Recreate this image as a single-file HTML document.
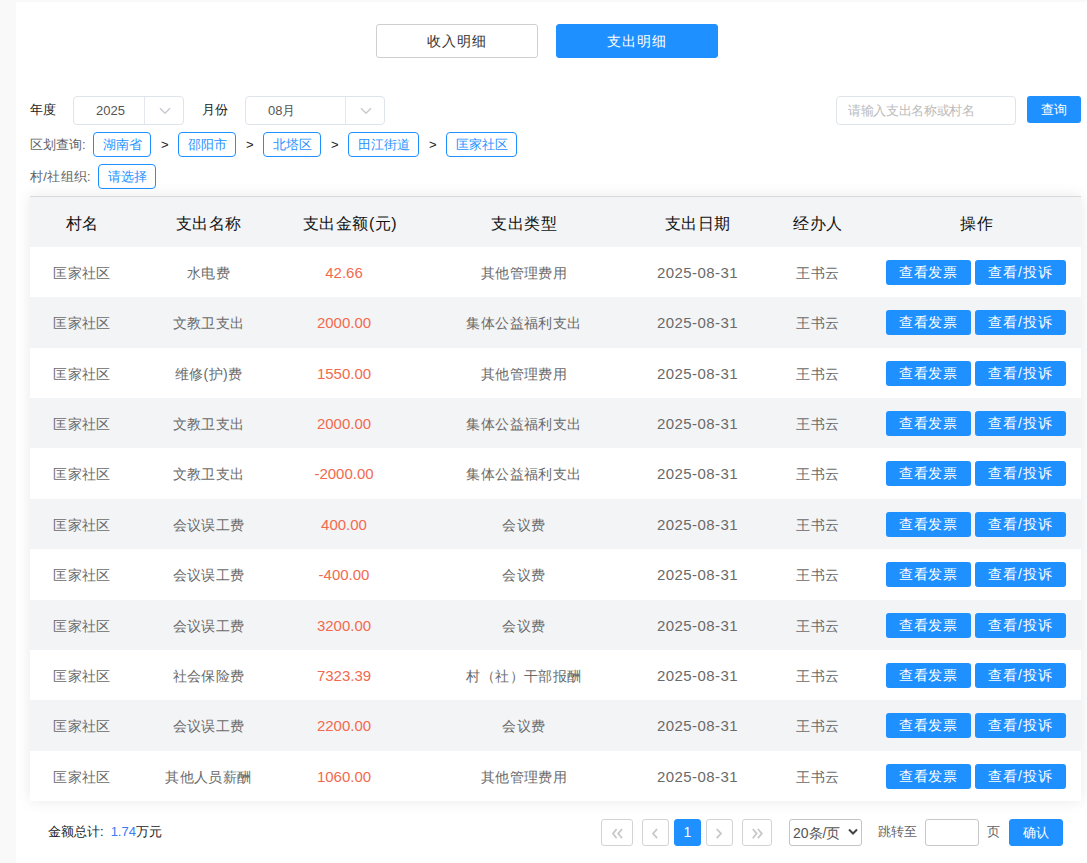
<!DOCTYPE html>
<html><head><meta charset="utf-8">
<style>
*{box-sizing:border-box;margin:0;padding:0}
html,body{width:1087px;height:863px;overflow:hidden;background:#f9f9f9;font-family:"Liberation Sans",sans-serif;position:relative}
.card{position:absolute;left:16px;top:2px;width:1071px;height:861px;background:#fff;}
.a{position:absolute;white-space:nowrap}
.tbtn{position:absolute;top:24px;width:162px;height:34px;border-radius:3px;font-size:14px;letter-spacing:1px;line-height:32px;text-align:center;}
.t1{left:376px;border:1px solid #cfcfcf;color:#333;background:#fff;}
.t2{left:556px;border:1px solid #1e90ff;background:#1e90ff;color:#fff;}
.lbl{position:absolute;font-size:13px;color:#222;line-height:28px;top:96px;}
.sel{position:absolute;top:96px;height:29px;border:1px solid #dfe4ea;border-radius:4px;font-size:13px;color:#555;line-height:27px;background:#fff}
.sel .dv{position:absolute;top:0;bottom:0;border-left:1px solid #e4e7ed;}
.chev{position:absolute;top:10px;}
.inp{position:absolute;left:836px;top:96px;width:180px;height:29px;border:1px solid #dfe4ea;border-radius:4px;font-size:13px;letter-spacing:-0.35px;color:#bbb;line-height:27px;padding-left:11px;}
.qbtn{position:absolute;left:1027px;top:96px;width:54px;height:27px;border-radius:3px;background:#1e90ff;color:#fff;font-size:13px;line-height:27px;text-align:center;}
.lbl2{position:absolute;font-size:13px;color:#606266;line-height:25px;}
.tag{position:absolute;height:25px;border:1px solid #1e90ff;border-radius:4px;color:#1e90ff;font-size:13px;line-height:23px;text-align:center;}
.gt{position:absolute;font-size:13px;color:#222;line-height:25px;top:132px;}
.tbl{position:absolute;left:30px;top:196px;width:1051px;height:605px;background:#fff;box-shadow:0 0 14px rgba(0,0,0,0.09);}
.hd{position:absolute;left:0;top:0;width:1051px;height:51px;border-top:1px solid #d9d9d9;background:#f3f4f6;}
.h{position:absolute;top:3px;height:47px;line-height:47px;font-size:16px;letter-spacing:0.5px;color:#111;text-align:center;white-space:nowrap}
.r{position:absolute;left:0;width:1051px;height:50.36px;background:#fff}
.r.g{background:#f3f4f6}
.c{position:absolute;top:1px;height:50px;line-height:50px;font-size:14px;letter-spacing:0.4px;color:#6a6a6a;text-align:center;white-space:nowrap}
.c .p{font-size:14px}
.amt{color:#f26a4e;font-size:15px;letter-spacing:0}
.dt{font-size:15px;letter-spacing:0.45px}
.btn{position:absolute;top:13px;height:25px;line-height:25px;border-radius:3px;background:#1e90ff;color:#fff;font-size:14px;letter-spacing:0.9px;text-align:center;white-space:nowrap}
.sum{position:absolute;left:48px;top:822px;font-size:13px;color:#222;line-height:20px;}
.sum b{font-weight:normal;color:#3d7cf0;}
.pg{position:absolute;top:819px;height:27px;border:1px solid #d3d3d3;border-radius:3px;background:#fff;}
.pg svg{position:absolute;left:0;top:0}
.pga{background:#1e90ff;border-color:#1e90ff;color:#fff;font-size:14px;line-height:25px;text-align:center}
</style></head><body>
<div class="card"></div>
<div class="tbtn t1">收入明细</div>
<div class="tbtn t2">支出明细</div>

<div class="lbl" style="left:30px">年度</div>
<div class="sel" style="left:73px;width:111px"><span class="a" style="left:22px">2025</span><span class="dv" style="left:70px"></span><span class="a" style="left:85px;top:0"><svg class="chev" width="12" height="8" viewBox="0 0 12 8"><path d="M1 1.2 L6 6.2 L11 1.2" fill="none" stroke="#c8ccd2" stroke-width="1.6"/></svg></span></div>
<div class="lbl" style="left:202px">月份</div>
<div class="sel" style="left:245px;width:140px"><span class="a" style="left:22px">08月</span><span class="dv" style="left:99px"></span><span class="a" style="left:114px;top:0"><svg class="chev" width="12" height="8" viewBox="0 0 12 8"><path d="M1 1.2 L6 6.2 L11 1.2" fill="none" stroke="#c8ccd2" stroke-width="1.6"/></svg></span></div>
<div class="inp">请输入支出名称或村名</div>
<div class="qbtn">查询</div>

<div class="lbl2" style="left:30px;top:132px">区划查询:</div>
<div class="tag" style="left:93px;top:132px;width:58px">湖南省</div>
<div class="gt" style="left:161px">&gt;</div>
<div class="tag" style="left:178px;top:132px;width:58px">邵阳市</div>
<div class="gt" style="left:246px">&gt;</div>
<div class="tag" style="left:263px;top:132px;width:58px">北塔区</div>
<div class="gt" style="left:331px">&gt;</div>
<div class="tag" style="left:348px;top:132px;width:71px">田江街道</div>
<div class="gt" style="left:429px">&gt;</div>
<div class="tag" style="left:446px;top:132px;width:71px">匡家社区</div>
<div class="lbl2" style="left:30px;top:164px;letter-spacing:0.3px">村/社组织:</div>
<div class="tag" style="left:98px;top:164px;width:58px">请选择</div>

<div class="tbl">
<div class="hd"><div class="h" style="left:0px;width:104px">村名</div><div class="h" style="left:104px;width:149px">支出名称</div><div class="h" style="left:253px;width:134px">支出金额(元)</div><div class="h" style="left:387px;width:214px">支出类型</div><div class="h" style="left:601px;width:133px">支出日期</div><div class="h" style="left:734px;width:108px">经办人</div><div class="h" style="left:842px;width:209px">操作</div></div>
<div class="r " style="top:51.00px"><div class="c " style="left:0px;width:104px">匡家社区</div><div class="c " style="left:104px;width:149px">水电费</div><div class="c amt" style="left:247px;width:134px">42.66</div><div class="c " style="left:387px;width:214px">其他管理费用</div><div class="c dt" style="left:601px;width:133px">2025-08-31</div><div class="c " style="left:734px;width:108px">王书云</div><div class="btn" style="left:856px;width:85px">查看发票</div><div class="btn" style="left:945px;width:91px">查看/投诉</div></div>
<div class="r g" style="top:101.36px"><div class="c " style="left:0px;width:104px">匡家社区</div><div class="c " style="left:104px;width:149px">文教卫支出</div><div class="c amt" style="left:247px;width:134px">2000.00</div><div class="c " style="left:387px;width:214px">集体公益福利支出</div><div class="c dt" style="left:601px;width:133px">2025-08-31</div><div class="c " style="left:734px;width:108px">王书云</div><div class="btn" style="left:856px;width:85px">查看发票</div><div class="btn" style="left:945px;width:91px">查看/投诉</div></div>
<div class="r " style="top:151.73px"><div class="c " style="left:0px;width:104px">匡家社区</div><div class="c " style="left:104px;width:149px">维修<span class="p">(</span>护<span class="p">)</span>费</div><div class="c amt" style="left:247px;width:134px">1550.00</div><div class="c " style="left:387px;width:214px">其他管理费用</div><div class="c dt" style="left:601px;width:133px">2025-08-31</div><div class="c " style="left:734px;width:108px">王书云</div><div class="btn" style="left:856px;width:85px">查看发票</div><div class="btn" style="left:945px;width:91px">查看/投诉</div></div>
<div class="r g" style="top:202.09px"><div class="c " style="left:0px;width:104px">匡家社区</div><div class="c " style="left:104px;width:149px">文教卫支出</div><div class="c amt" style="left:247px;width:134px">2000.00</div><div class="c " style="left:387px;width:214px">集体公益福利支出</div><div class="c dt" style="left:601px;width:133px">2025-08-31</div><div class="c " style="left:734px;width:108px">王书云</div><div class="btn" style="left:856px;width:85px">查看发票</div><div class="btn" style="left:945px;width:91px">查看/投诉</div></div>
<div class="r " style="top:252.45px"><div class="c " style="left:0px;width:104px">匡家社区</div><div class="c " style="left:104px;width:149px">文教卫支出</div><div class="c amt" style="left:247px;width:134px">-2000.00</div><div class="c " style="left:387px;width:214px">集体公益福利支出</div><div class="c dt" style="left:601px;width:133px">2025-08-31</div><div class="c " style="left:734px;width:108px">王书云</div><div class="btn" style="left:856px;width:85px">查看发票</div><div class="btn" style="left:945px;width:91px">查看/投诉</div></div>
<div class="r g" style="top:302.82px"><div class="c " style="left:0px;width:104px">匡家社区</div><div class="c " style="left:104px;width:149px">会议误工费</div><div class="c amt" style="left:247px;width:134px">400.00</div><div class="c " style="left:387px;width:214px">会议费</div><div class="c dt" style="left:601px;width:133px">2025-08-31</div><div class="c " style="left:734px;width:108px">王书云</div><div class="btn" style="left:856px;width:85px">查看发票</div><div class="btn" style="left:945px;width:91px">查看/投诉</div></div>
<div class="r " style="top:353.18px"><div class="c " style="left:0px;width:104px">匡家社区</div><div class="c " style="left:104px;width:149px">会议误工费</div><div class="c amt" style="left:247px;width:134px">-400.00</div><div class="c " style="left:387px;width:214px">会议费</div><div class="c dt" style="left:601px;width:133px">2025-08-31</div><div class="c " style="left:734px;width:108px">王书云</div><div class="btn" style="left:856px;width:85px">查看发票</div><div class="btn" style="left:945px;width:91px">查看/投诉</div></div>
<div class="r g" style="top:403.55px"><div class="c " style="left:0px;width:104px">匡家社区</div><div class="c " style="left:104px;width:149px">会议误工费</div><div class="c amt" style="left:247px;width:134px">3200.00</div><div class="c " style="left:387px;width:214px">会议费</div><div class="c dt" style="left:601px;width:133px">2025-08-31</div><div class="c " style="left:734px;width:108px">王书云</div><div class="btn" style="left:856px;width:85px">查看发票</div><div class="btn" style="left:945px;width:91px">查看/投诉</div></div>
<div class="r " style="top:453.91px"><div class="c " style="left:0px;width:104px">匡家社区</div><div class="c " style="left:104px;width:149px">社会保险费</div><div class="c amt" style="left:247px;width:134px">7323.39</div><div class="c " style="left:387px;width:214px">村（社）干部报酬</div><div class="c dt" style="left:601px;width:133px">2025-08-31</div><div class="c " style="left:734px;width:108px">王书云</div><div class="btn" style="left:856px;width:85px">查看发票</div><div class="btn" style="left:945px;width:91px">查看/投诉</div></div>
<div class="r g" style="top:504.27px"><div class="c " style="left:0px;width:104px">匡家社区</div><div class="c " style="left:104px;width:149px">会议误工费</div><div class="c amt" style="left:247px;width:134px">2200.00</div><div class="c " style="left:387px;width:214px">会议费</div><div class="c dt" style="left:601px;width:133px">2025-08-31</div><div class="c " style="left:734px;width:108px">王书云</div><div class="btn" style="left:856px;width:85px">查看发票</div><div class="btn" style="left:945px;width:91px">查看/投诉</div></div>
<div class="r " style="top:554.64px"><div class="c " style="left:0px;width:104px">匡家社区</div><div class="c " style="left:104px;width:149px">其他人员薪酬</div><div class="c amt" style="left:247px;width:134px">1060.00</div><div class="c " style="left:387px;width:214px">其他管理费用</div><div class="c dt" style="left:601px;width:133px">2025-08-31</div><div class="c " style="left:734px;width:108px">王书云</div><div class="btn" style="left:856px;width:85px">查看发票</div><div class="btn" style="left:945px;width:91px">查看/投诉</div></div>
</div>

<div class="sum">金额总计:<b style="margin-left:7px">1.74</b>万元</div>
<div class="pg" style="left:601px;width:32px"><svg width="32" height="27" viewBox="0 0 32 27"><path d="M14.6 9 L11 13.6 L14.6 18.2 M20 9 L16.2 13.6 L20 18.2" fill="none" stroke="#c8c8c8" stroke-width="1.8"/></svg></div>
<div class="pg" style="left:642px;width:27px"><svg width="27" height="27" viewBox="0 0 27 27"><path d="M14.1 9 L10 13.6 L14.1 18.2" fill="none" stroke="#c8c8c8" stroke-width="1.8"/></svg></div>
<div class="pg pga" style="left:674px;width:27px">1</div>
<div class="pg" style="left:706px;width:27px"><svg width="27" height="27" viewBox="0 0 27 27"><path d="M9.7 9 L14 13.6 L9.7 18.2" fill="none" stroke="#c8c8c8" stroke-width="1.8"/></svg></div>
<div class="pg" style="left:742px;width:30px"><svg width="30" height="27" viewBox="0 0 30 27"><path d="M9.8 9 L13.7 13.6 L9.8 18.2 M14.9 9 L18.8 13.6 L14.9 18.2" fill="none" stroke="#c8c8c8" stroke-width="1.8"/></svg></div>
<div class="pg" style="left:789px;width:73px;border-color:#c4c4c4;font-size:14px;color:#555;line-height:27px;padding-left:3px">20条/页<svg style="left:58px;top:8px" width="10" height="8" viewBox="0 0 10 8"><path d="M1 1.5 L5 5.5 L9 1.5" fill="none" stroke="#444" stroke-width="2"/></svg></div>
<div class="a" style="left:878px;top:822px;font-size:13px;line-height:20px;color:#666">跳转至</div>
<div class="pg" style="left:925px;width:54px;border-color:#c8c8c8"></div>
<div class="a" style="left:987px;top:822px;font-size:13px;line-height:20px;color:#666">页</div>
<div class="pg pga" style="left:1009px;width:54px;font-size:13px">确认</div>
</body></html>
